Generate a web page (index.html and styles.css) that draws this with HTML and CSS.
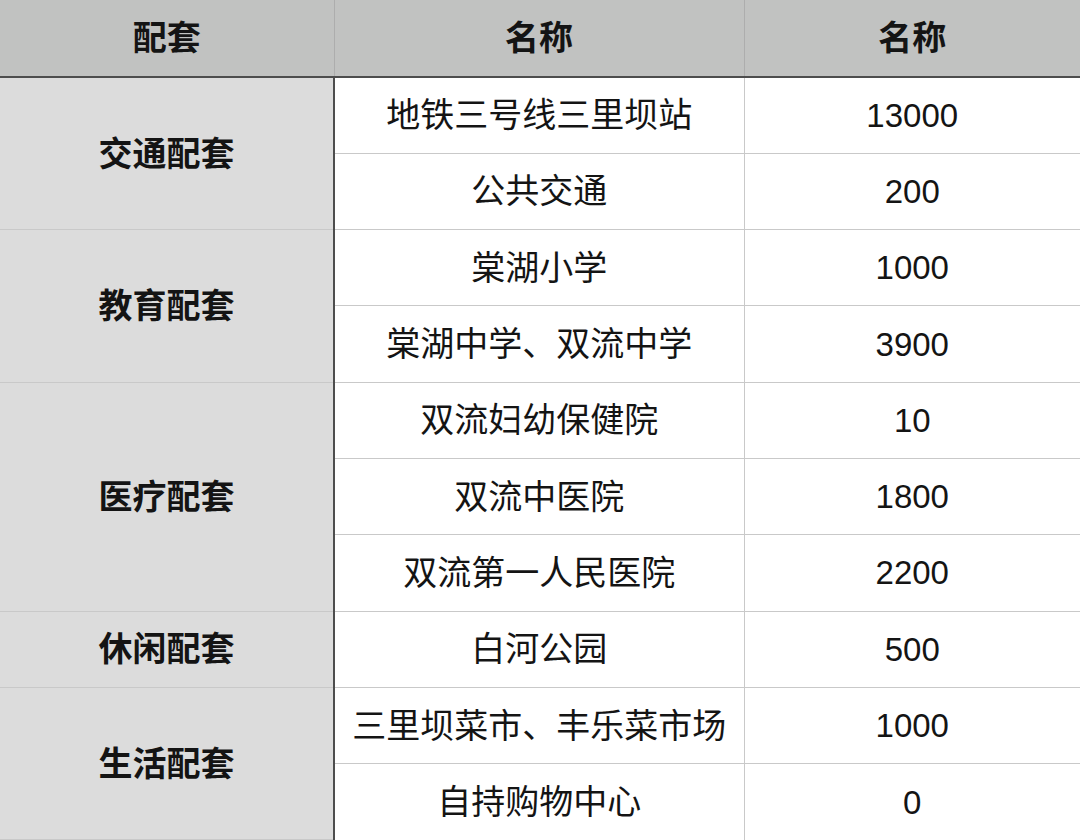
FILE: index.html
```html
<!DOCTYPE html>
<html lang="zh-CN">
<head>
<meta charset="utf-8">
<title>配套</title>
<link rel="stylesheet" href="styles.css">
</head>
<body>
<table class="grid">
  <colgroup>
    <col class="c1"><col class="c2"><col class="c3">
  </colgroup>
  <thead>
    <tr class="head">
      <th>配套</th>
      <th>名称</th>
      <th>名称</th>
    </tr>
  </thead>
  <tbody>
    <tr><td class="cat" rowspan="2">交通配套</td><td>地铁三号线三里坝站</td><td class="num">13000</td></tr>
    <tr><td>公共交通</td><td class="num">200</td></tr>
    <tr><td class="cat" rowspan="2">教育配套</td><td>棠湖小学</td><td class="num">1000</td></tr>
    <tr><td>棠湖中学、双流中学</td><td class="num">3900</td></tr>
    <tr><td class="cat" rowspan="3">医疗配套</td><td>双流妇幼保健院</td><td class="num">10</td></tr>
    <tr><td>双流中医院</td><td class="num">1800</td></tr>
    <tr><td>双流第一人民医院</td><td class="num">2200</td></tr>
    <tr><td class="cat">休闲配套</td><td>白河公园</td><td class="num">500</td></tr>
    <tr><td class="cat" rowspan="2">生活配套</td><td>三里坝菜市、丰乐菜市场</td><td class="num">1000</td></tr>
    <tr><td>自持购物中心</td><td class="num">0</td></tr>
  </tbody>
</table>
</body>
</html>
```

FILE: styles.css
```css
html, body {
  margin: 0;
  padding: 0;
  background: #ffffff;
}
.grid {
  width: 1080px;
  height: 840px;
  border-collapse: collapse;
  table-layout: fixed;
  font-family: "Liberation Sans", "Noto Sans CJK SC", sans-serif;
  font-size: 34px;
  color: #141414;
}
.c1 { width: 334px; }
.c2 { width: 410px; }
.c3 { width: 336px; }
.grid th, .grid td {
  text-align: center;
  vertical-align: middle;
  padding: 0;
  border: 1px solid #c9c9c9;
  line-height: 1;
}
.grid td.num { font-size: 33px; }
.grid tr { height: 76.3px; }
.grid tr.head { height: 77px; }
.grid th {
  background: #c1c2c1;
  font-weight: bold;
  border-top: none;
  border-left-color: #adadad;
  border-right-color: #adadad;
  border-bottom: 2px solid #4d4d4d;
}
.grid th:first-child { border-left: none; }
.grid th:last-child { border-right: none; }
.grid td:last-child { border-right: none; }
.grid tbody tr:last-child td { border-bottom: none; }
.grid td.cat {
  background: #dcdcdc;
  font-weight: bold;
  border-left: none;
  border-right: 2px solid #4d4d4d;
}
```
